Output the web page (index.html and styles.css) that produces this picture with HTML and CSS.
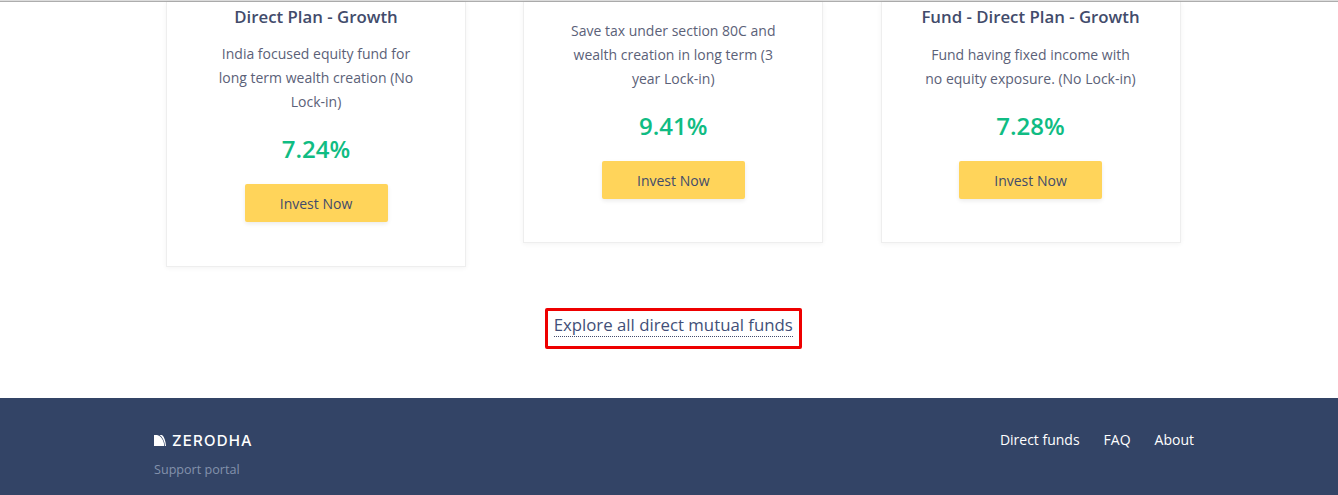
FILE: index.html
```html
<!DOCTYPE html>
<html>
<head>
    <title>Direct mutual funds</title>
    <link rel="stylesheet" href="styles.css">
</head>
<body>
    <div class="top-line"></div>
    <div class="page">
        <div class="cards">
            <div class="card card-tall">
                <h3>Direct Plan - Growth</h3>
                <p>India focused equity fund for long term wealth creation (No Lock-in)</p>
                <div class="rate">7.24%</div>
                <a class="btn" href="#">Invest Now</a>
            </div>
            <div class="card card-notitle">
                <p>Save tax under section 80C and wealth creation in long term (3 year Lock-in)</p>
                <div class="rate">9.41%</div>
                <a class="btn" href="#">Invest Now</a>
            </div>
            <div class="card card-debt">
                <h3>Fund - Direct Plan - Growth</h3>
                <p class="narrow">Fund having fixed income with no equity exposure. (No Lock-in)</p>
                <div class="rate">7.28%</div>
                <a class="btn" href="#">Invest Now</a>
            </div>
        </div>
        <div class="explore">
            <a href="#"><span>Explore all direct mutual funds</span></a>
        </div>
    </div>
    <div class="footer">
        <div class="footer-inner">
            <div class="footer-left">
                <div class="logo">
                    <svg width="12" height="11" viewBox="0 0 12 11"><path d="M0 0H3C7 1 10 5 10.2 11H0Z" fill="#fff"/><path d="M5.5 0H8C10.5 2 11.6 6 12 11H11C10.6 6 8.5 2 5.5 0Z" fill="#fff"/></svg>
                    <span>ZERODHA</span>
                </div>
                <a class="support" href="#">Support portal</a>
            </div>
            <div class="footer-links">
                <a href="#">Direct funds</a>
                <a href="#">FAQ</a>
                <a href="#">About</a>
            </div>
        </div>
    </div>
</body>
</html>
```

FILE: styles.css
```css
body {
    margin: 0;
    font-family: "Open Sans", sans-serif;
    color: #424b6b;
    background-color: white;
    height: 495px;
    overflow: hidden;
}

a {
    text-decoration: none;
}

.top-line {
    height: 1px;
    border-top: 1px solid #dddddd;
    background-color: #adadad;
}

.page {
    padding-left: 8.5px;
}

.cards {
    display: grid;
    grid-template-columns: repeat(3, 300px);
    column-gap: 57.25px;
    justify-content: center;
    align-items: start;
    height: 306px;
}

.card {
    box-sizing: border-box;
    height: 241px;
    padding: 4px 20px 0;
    text-align: center;
    background-color: white;
    border: 1px solid #eeeeee;
    border-top: none;
    box-shadow: 0 1px 5px rgba(0, 0, 0, 0.05);
}

.card-tall {
    height: 265px;
}

.card-notitle {
    padding-top: 17px;
}

h3 {
    margin: 0 0 14px;
    font-size: 16.8px;
    line-height: 22px;
    font-weight: 600;
    color: #424b6b;
}

.card-debt h3 {
    margin-bottom: 15px;
}

p {
    margin: 0 auto 18px;
    width: 205px;
    font-size: 14px;
    line-height: 24px;
    color: #5b6178;
}

.narrow {
    width: 215px;
}

.rate {
    margin-bottom: 18px;
    font-size: 24px;
    line-height: 34px;
    font-weight: 600;
    color: #10bc83;
}

.btn {
    display: block;
    width: 143px;
    height: 38px;
    margin: 0 auto;
    font-size: 14px;
    line-height: 40px;
    color: #424b6b;
    background-color: #ffd45a;
    border-radius: 2px;
    box-shadow: 0 2px 4px rgba(0, 0, 0, 0.08);
}

.explore {
    display: flex;
    justify-content: center;
    height: 90px;
}

.explore a {
    box-sizing: border-box;
    height: 41px;
    padding: 3px 6px 0;
    font-size: 16.8px;
    line-height: 22px;
    color: #424f78;
    border: 3px solid #ee0000;
    border-radius: 2px;
}

.explore span {
    display: block;
    border-bottom: 1px dotted #424b6b;
}

.footer {
    height: 97px;
    background-color: #334466;
}

.footer-inner {
    display: flex;
    justify-content: space-between;
    width: 1040px;
    margin: 0 auto;
    padding: 32px 0 0 10px;
}

.logo {
    display: flex;
    align-items: center;
    gap: 6px;
    height: 20px;
    color: white;
    font-family: Inter, sans-serif;
    font-size: 15px;
    font-weight: 500;
    letter-spacing: 1.2px;
}

.support {
    display: block;
    margin-top: 11px;
    font-size: 12.6px;
    line-height: 18px;
    color: #8392ac;
}

.footer-links {
    display: flex;
    gap: 24px;
    font-size: 14px;
    line-height: 20px;
}

.footer-links a {
    color: white;
}
```
